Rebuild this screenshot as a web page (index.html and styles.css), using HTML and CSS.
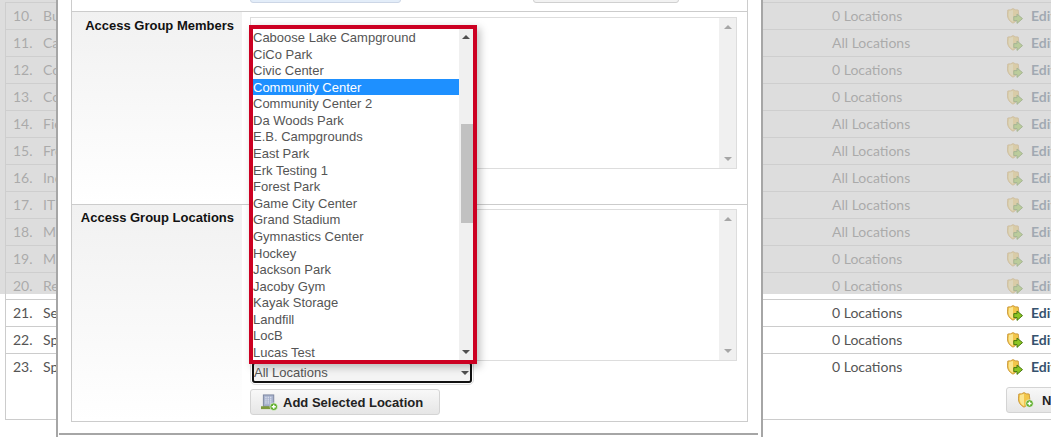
FILE: index.html
```html
<!DOCTYPE html>
<html lang="en">
<head>
    <meta charset="UTF-8">
    <meta name="viewport" content="width=device-width, initial-scale=1.0">
    <title>Access Groups</title>
    <link rel="stylesheet" href="styles.css">
</head>
<body>
    <svg class="icon-defs" width="0" height="0">
        <symbol id="shield-edit" viewBox="0 0 16 16">
            <path d="M6 .6 L8.4 1.8 L11.2 2 L11.8 7 C11.8 10.6 9.4 13.4 6 15.2 C2.6 13.4 .4 10.6 .4 7 L.8 2 L3.6 1.8 Z" fill="#f2c64a" stroke="#c9963a" stroke-width=".9"/>
            <path d="M6 2 L6 14 C3.2 12.6 1.7 10.2 1.7 7 L2 3.1 Z" fill="#fbe590"/>
            <path d="M6.8 8.6 H10 V6 L15.5 10.6 L10 15.4 V12.6 H6.8 Z" fill="#8cc524" stroke="#47780f" stroke-width="1"/>
        </symbol>
        <symbol id="shield-new" viewBox="0 0 16 16">
            <path d="M6 .6 L8.4 1.8 L11.2 2 L11.8 7 C11.8 10.6 9.4 13.4 6 15.2 C2.6 13.4 .4 10.6 .4 7 L.8 2 L3.6 1.8 Z" fill="#f2c64a" stroke="#c9963a" stroke-width=".9"/>
            <path d="M6 2 L6 14 C3.2 12.6 1.7 10.2 1.7 7 L2 3.1 Z" fill="#fbe590"/>
            <circle cx="11.5" cy="11.5" r="3.8" fill="#5fae2c" stroke="#fff" stroke-width=".6"/>
            <path d="M11.5 9.5 V13.5 M9.5 11.5 H13.5" stroke="#fff" stroke-width="1.4"/>
        </symbol>
    </svg>

    <!-- Access group list behind the dialog -->
    <div class="group-list">
        <div class="group-row"><span class="num">10.</span><span class="name">Building</span><span class="locs">0 Locations</span><a class="edit"><svg class="shield"><use href="#shield-edit"/></svg>Edit</a></div>
        <div class="group-row"><span class="num">11.</span><span class="name">Camps</span><span class="locs">All Locations</span><a class="edit"><svg class="shield"><use href="#shield-edit"/></svg>Edit</a></div>
        <div class="group-row"><span class="num">12.</span><span class="name">Concessions</span><span class="locs">0 Locations</span><a class="edit"><svg class="shield"><use href="#shield-edit"/></svg>Edit</a></div>
        <div class="group-row"><span class="num">13.</span><span class="name">Courts</span><span class="locs">0 Locations</span><a class="edit"><svg class="shield"><use href="#shield-edit"/></svg>Edit</a></div>
        <div class="group-row"><span class="num">14.</span><span class="name">Fields</span><span class="locs">All Locations</span><a class="edit"><svg class="shield"><use href="#shield-edit"/></svg>Edit</a></div>
        <div class="group-row"><span class="num">15.</span><span class="name">Front Desk</span><span class="locs">All Locations</span><a class="edit"><svg class="shield"><use href="#shield-edit"/></svg>Edit</a></div>
        <div class="group-row"><span class="num">16.</span><span class="name">Indoor</span><span class="locs">All Locations</span><a class="edit"><svg class="shield"><use href="#shield-edit"/></svg>Edit</a></div>
        <div class="group-row"><span class="num">17.</span><span class="name">IT</span><span class="locs">All Locations</span><a class="edit"><svg class="shield"><use href="#shield-edit"/></svg>Edit</a></div>
        <div class="group-row"><span class="num">18.</span><span class="name">Maintenance</span><span class="locs">All Locations</span><a class="edit"><svg class="shield"><use href="#shield-edit"/></svg>Edit</a></div>
        <div class="group-row"><span class="num">19.</span><span class="name">Marina</span><span class="locs">0 Locations</span><a class="edit"><svg class="shield"><use href="#shield-edit"/></svg>Edit</a></div>
        <div class="group-row"><span class="num">20.</span><span class="name">Rentals</span><span class="locs">0 Locations</span><a class="edit"><svg class="shield"><use href="#shield-edit"/></svg>Edit</a></div>
        <div class="group-row"><span class="num">21.</span><span class="name">Security</span><span class="locs">0 Locations</span><a class="edit"><svg class="shield"><use href="#shield-edit"/></svg>Edit</a></div>
        <div class="group-row"><span class="num">22.</span><span class="name">Sports</span><span class="locs">0 Locations</span><a class="edit"><svg class="shield"><use href="#shield-edit"/></svg>Edit</a></div>
        <div class="group-row last"><span class="num">23.</span><span class="name">Spa</span><span class="locs">0 Locations</span><a class="edit"><svg class="shield"><use href="#shield-edit"/></svg>Edit</a></div>
        <div class="list-footer">
            <button class="btn new-btn"><svg class="shield-sm"><use href="#shield-new"/></svg>New Access Group</button>
        </div>
    </div>

    <div class="backdrop"></div>

    <!-- Dialog -->
    <div class="dialog">
        <div class="panel">
            <div class="panel-top">
                <button class="top-btn blue"></button>
                <button class="top-btn grey"></button>
            </div>
            <div class="panel-row members">
                <div class="label">Access Group Members</div>
                <div class="field">
                    <div class="listbox">
                        <div class="listbox-body"></div>
                        <div class="scrollbar">
                            <span class="arrow up"></span>
                            <span class="arrow down"></span>
                        </div>
                    </div>
                </div>
            </div>
            <div class="panel-row locations">
                <div class="label">Access Group Locations</div>
                <div class="field">
                    <div class="listbox">
                        <div class="listbox-body"></div>
                        <div class="scrollbar">
                            <span class="arrow up"></span>
                            <span class="arrow down"></span>
                        </div>
                    </div>
                    <div class="dropdown">
                        <span>All Locations</span>
                        <span class="arrow down dark"></span>
                    </div>
                    <button class="btn add-btn">
                        <svg class="add-icon" viewBox="0 0 18 18" width="17" height="17">
                            <rect x="2.5" y="1" width="11" height="12" fill="#aab4cf" stroke="#7c869f"/>
                            <path d="M4.5 3.5h7M4.5 5.5h7M4.5 7.5h7M4.5 9.5h7" stroke="#e6eaf4" stroke-dasharray="1.5 1"/>
                            <rect x="0" y="13" width="13" height="3" fill="#7d9a3c"/>
                            <circle cx="13.5" cy="13.5" r="4" fill="#5fae2c" stroke="#fff" stroke-width=".6"/>
                            <path d="M13.5 11.3v4.4M11.3 13.5h4.4" stroke="#fff" stroke-width="1.5"/>
                        </svg>
                        Add Selected Location
                    </button>
                </div>
            </div>
        </div>
        <div class="dialog-foot"></div>
    </div>

    <!-- Open dropdown, outlined in red -->
    <div class="popup">
        <div class="popup-list">
            <div class="opt">Caboose Lake Campground</div>
            <div class="opt">CiCo Park</div>
            <div class="opt">Civic Center</div>
            <div class="opt selected">Community Center</div>
            <div class="opt">Community Center 2</div>
            <div class="opt">Da Woods Park</div>
            <div class="opt">E.B. Campgrounds</div>
            <div class="opt">East Park</div>
            <div class="opt">Erk Testing 1</div>
            <div class="opt">Forest Park</div>
            <div class="opt">Game City Center</div>
            <div class="opt">Grand Stadium</div>
            <div class="opt">Gymnastics Center</div>
            <div class="opt">Hockey</div>
            <div class="opt">Jackson Park</div>
            <div class="opt">Jacoby Gym</div>
            <div class="opt">Kayak Storage</div>
            <div class="opt">Landfill</div>
            <div class="opt">LocB</div>
            <div class="opt">Lucas Test</div>
        </div>
        <div class="popup-scroll">
            <span class="arrow up dark"></span>
            <span class="thumb"></span>
            <span class="arrow down dark"></span>
        </div>
    </div>
</body>
</html>
```

FILE: styles.css
```css
html, body {
    margin: 0;
    height: 437px;
    overflow: hidden;
    background-color: #fff;
}
body {
    position: relative;
    font-family: Lato, Arial, sans-serif;
    font-size: 14px;
    color: #555;
}
.icon-defs {
    position: absolute;
}

/* list behind the dialog */
.group-list {
    width: 1200px;
    margin: 2px 0 0 5px;
    height: 418px;
    box-sizing: border-box;
    border-left: 1px solid #ccc;
    border-top: 1px solid #ccc;
    border-bottom: 1px solid #ccc;
}
.group-row {
    display: flex;
    align-items: center;
    height: 25px;
    padding-bottom: 1px;
    border-bottom: 1px solid #ccc;
    white-space: nowrap;
}
.group-row.last {
    border-bottom: none;
}
.num {
    width: 37px;
    padding-left: 7px;
    box-sizing: border-box;
}
.name {
    width: 789px;
}
.locs {
    width: 175px;
}
.edit {
    display: flex;
    align-items: center;
    font-weight: bold;
    color: #36526e;
}
.shield {
    width: 16px;
    height: 16px;
    margin: 1px 8px 0 0;
}
.shield-sm {
    width: 16px;
    height: 16px;
    margin-right: 8px;
}
.list-footer {
    padding: 7px 0 0 1000px;
}
.btn {
    display: flex;
    align-items: center;
    height: 26px;
    padding: 0;
    font-family: "Liberation Sans", Arial, sans-serif;
    font-size: 13px;
    font-weight: bold;
    color: #222;
    white-space: nowrap;
    border: 1px solid #d4d4d4;
    border-radius: 3px;
    background: linear-gradient(#f8f8f8, #e6e6e6);
}
.new-btn {
    width: 160px;
    padding-left: 11px;
}

.backdrop {
    position: absolute;
    top: 0;
    left: 0;
    width: 100%;
    height: 294px;
    background-color: rgba(206, 206, 206, 0.7);
}

/* dialog */
.dialog {
    position: absolute;
    top: 0;
    left: 56px;
    width: 707px;
    height: 437px;
    box-sizing: border-box;
    padding: 0 14px;
    background-color: #fff;
    border-left: 2px solid #a6a6a6;
    border-right: 2px solid #a6a6a6;
    font-family: "Liberation Sans", Arial, sans-serif;
}
.panel {
    width: 677px;
    height: 422px;
    box-sizing: border-box;
    margin-left: -1px;
    border-left: 1px solid #ccc;
    border-right: 1px solid #ccc;
    border-bottom: 1px solid #ccc;
}
.panel-top {
    display: flex;
    align-items: flex-end;
    height: 11px;
    padding: 0 0 8px 178px;
    box-sizing: border-box;
    overflow: hidden;
}
.top-btn {
    flex: none;
    width: 151px;
    height: 20px;
    padding: 0;
    border: 1px solid #ccd6e6;
    border-radius: 3px;
    background-color: #e3edf9;
}
.top-btn.grey {
    width: 146px;
    margin-left: 132px;
    border-color: #d0d0d0;
    background-color: #f2f2f2;
}
.panel-row {
    display: flex;
    border-top: 1px solid #ccc;
}
.panel-row.members {
    height: 192px;
}
.panel-row.locations {
    height: 216px;
}
.label {
    width: 170px;
    box-sizing: border-box;
    padding: 5px 8px 0 0;
    text-align: right;
    font-size: 13px;
    font-weight: bold;
    color: #111;
    white-space: nowrap;
    background: linear-gradient(#f1f1f1, #fff);
}
.members .label {
    padding-top: 6px;
}
.field {
    padding: 4px 0 0 8px;
    flex: 1;
}
.members .field {
    padding-top: 5px;
}
.listbox {
    display: flex;
    width: 487px;
    height: 152px;
    box-sizing: border-box;
    border: 1px solid #ddd;
}
.listbox-body {
    flex: 1;
}
.scrollbar {
    display: flex;
    flex-direction: column;
    justify-content: space-between;
    align-items: center;
    width: 17px;
    padding: 7px 0;
    box-sizing: border-box;
    background-color: #f0f0f0;
}
.arrow {
    width: 0;
    height: 0;
    border-left: 4px solid transparent;
    border-right: 4px solid transparent;
}
.arrow.up {
    border-bottom: 4px solid #a6a6a6;
}
.arrow.down {
    border-top: 4px solid #a6a6a6;
}
.arrow.up.dark {
    border-bottom-color: #505050;
}
.arrow.down.dark {
    border-top-color: #505050;
}
.dropdown {
    display: flex;
    justify-content: space-between;
    align-items: center;
    width: 220px;
    height: 21px;
    box-sizing: border-box;
    margin: 1px 0 0 2px;
    padding: 0 1px 0 0;
    font-size: 13px;
    color: #555;
    background-color: #f4f4f4;
    border: 2px solid #111;
    border-radius: 3px;
    outline: 1px solid #ddd;
    outline-offset: 1px;
}
.add-btn {
    width: 190px;
    margin-top: 6px;
    padding-left: 10px;
}
.add-icon {
    margin-right: 5px;
}
.dialog-foot {
    width: 699px;
    margin: 11px 0 0 -13px;
    border-top: 2px solid #a6a6a6;
}

/* open dropdown */
.popup {
    position: absolute;
    top: 25px;
    left: 249px;
    display: flex;
    width: 228px;
    height: 339px;
    box-sizing: border-box;
    background-color: #fff;
    border: 4px solid #cc0022;
    box-shadow: 3px 3px 8px rgba(0, 0, 0, 0.25);
    font-family: "Liberation Sans", Arial, sans-serif;
}
.popup-list {
    flex: 1;
}
.opt {
    height: 16.58px;
    line-height: 17.6px;
    font-size: 13px;
    color: #555;
    white-space: nowrap;
}
.opt.selected {
    color: #fff;
    background-color: #1e90ff;
}
.popup-scroll {
    position: relative;
    display: flex;
    flex-direction: column;
    justify-content: space-between;
    align-items: center;
    width: 14px;
    padding: 6px 0;
    box-sizing: border-box;
    background-color: #f0f0f0;
}
.thumb {
    position: absolute;
    top: 95px;
    right: 0;
    width: 12px;
    height: 99px;
    background-color: #c1c1c1;
}
```
